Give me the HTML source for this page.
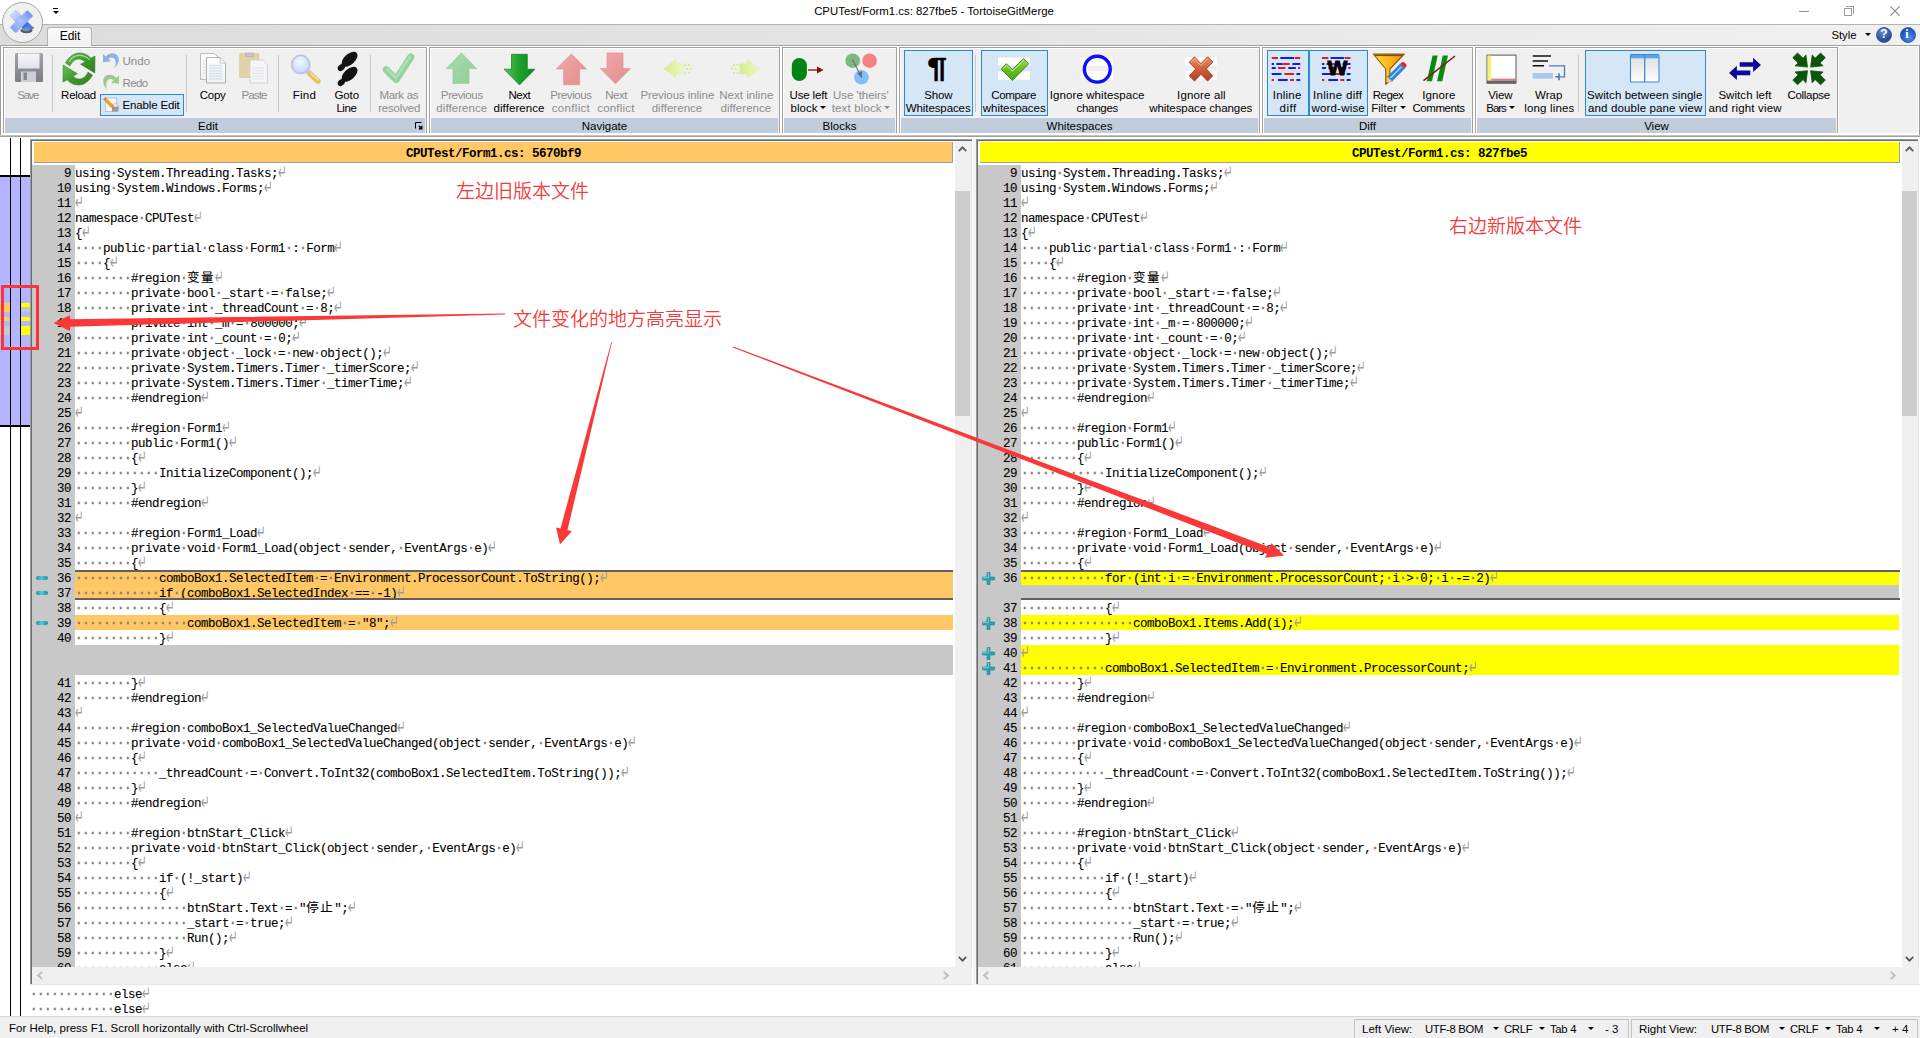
<!DOCTYPE html>
<html lang="zh"><head><meta charset="utf-8"><title>CPUTest/Form1.cs: 827fbe5 - TortoiseGitMerge</title>
<style>
*{box-sizing:border-box}
html,body{margin:0;padding:0;overflow:hidden}
body{width:1920px;height:1038px;position:relative;overflow:hidden;background:#fff;font-family:"Liberation Sans","Noto Sans CJK SC",sans-serif;font-size:11.5px;color:#000}
.a{position:absolute}
.t{position:absolute;white-space:pre;line-height:13px;text-align:center;transform:translateX(-50%)}
.dis{color:#8c8c8c}
.grp{position:absolute;top:47px;height:86px;border:1px solid #a0a0a0;border-bottom:none;background:#f0f0f0;box-shadow:0 0 0 1px #fff,inset 1px 1px 0 #fff}
.grp .lab{position:absolute;left:1px;right:1px;bottom:0;height:15px;background:#c1cddc;text-align:center;line-height:16px;font-size:11.5px}
.sep{position:absolute;top:55px;height:57px;width:1px;background:#c6c6c6}
.hl{position:absolute;background:#d5e6f7;border:1px solid #2b8ad6}
.code{position:absolute;font-family:"Liberation Mono","Noto Sans CJK SC",monospace;font-size:12.5px;letter-spacing:-0.5px;line-height:15px;white-space:pre;color:#000;height:15px}
.ln{position:absolute;font-family:"Liberation Mono",monospace;font-size:12.5px;letter-spacing:-0.5px;line-height:15px;white-space:pre;text-align:right;width:40px;height:15px}
.code,.ln{padding-top:2px;-webkit-text-stroke:0.1px #000}
.w{color:#808080;-webkit-text-stroke:0.5px #808080}
.ret{display:inline-block;width:7px;line-height:0;font-family:"DejaVu Sans",sans-serif;font-size:15px;letter-spacing:0;color:#9c9c9c;-webkit-text-stroke:0;transform:translate(0,0.5px) scale(.68,1.32);transform-origin:0 50%}
.cj{letter-spacing:1.5px;font-weight:400}
.row{position:absolute;height:15px}
</style></head><body>

<!-- title bar -->
<div class="a" style="left:0;top:0;width:1920px;height:24px;background:#fff"></div>
<div class="a" style="left:0;top:24px;width:1920px;height:1px;background:#b4b4b4"></div>
<div class="a" style="left:0;top:25px;width:1920px;height:20px;background:linear-gradient(90deg,#dcdcdc,#e4e4e4 50%,#f0f0f0 95%)"></div>
<div class="t" style="left:934px;top:5px;font-size:11.4px">CPUTest/Form1.cs: 827fbe5 - TortoiseGitMerge</div>
<!-- app button -->
<div class="a" style="left:2px;top:2px;width:41px;height:41px;border-radius:50%;border:1px solid #a4a4a4;background:#f0f0f0"></div>
<svg class="a" style="left:6px;top:6px" width="34" height="34" viewBox="6 6 34 34">
<defs>
<linearGradient id="lgA" x1="0" y1="0" x2="1" y2="0"><stop offset="0" stop-color="#d4dfff"/><stop offset=".4" stop-color="#9fb6fa"/><stop offset=".6" stop-color="#3c68ec"/><stop offset="1" stop-color="#4f7cf4"/></linearGradient>
<linearGradient id="lgB" x1="0" y1="0" x2="1" y2="0"><stop offset="0" stop-color="#6088f4"/><stop offset=".5" stop-color="#b4c8fd"/><stop offset="1" stop-color="#7498f7"/></linearGradient>
</defs>
<rect x="9.300" y="17.500" width="24.500" height="8.200" rx="1.200" transform="rotate(45 21.550 21.600)" fill="url(#lgA)" stroke="#8fa8f0" stroke-width=".5"/>
<rect x="9.300" y="17.500" width="24.500" height="8.200" rx="1.200" transform="rotate(135 21.550 21.600)" fill="url(#lgB)" stroke="#8fa8f0" stroke-width=".5" opacity=".9"/>
<ellipse cx="26.500" cy="30.500" rx="6" ry="2.800" fill="#4a5870"/>
<ellipse cx="26.300" cy="29.300" rx="4" ry="2" fill="#6f92c4"/>
<circle cx="32.500" cy="28" r="1.300" fill="#6a7a98"/>
</svg>
<!-- quick access dropdown -->
<div class="a" style="left:53px;top:8px;width:5px;height:1px;background:#000"></div>
<div class="a" style="left:52.500px;top:11px;width:0;height:0;border-left:3px solid transparent;border-right:3px solid transparent;border-top:3.500px solid #000"></div>
<!-- window controls -->
<div class="a" style="left:1799px;top:11px;width:10px;height:1px;background:#8e8e8e"></div>
<div class="a" style="left:1844px;top:8px;width:8px;height:8px;border:1px solid #9a9a9a"></div>
<div class="a" style="left:1846px;top:6px;width:8px;height:8px;border-top:1px solid #9a9a9a;border-right:1px solid #9a9a9a"></div>
<svg class="a" style="left:1890px;top:6px" width="10" height="10"><path d="M0.3 0.3L9.7 9.7M9.7 0.3L0.3 9.7" stroke="#8a8a8a" stroke-width="1.1" fill="none"/></svg>
<!-- Edit tab -->
<div class="a" style="left:47px;top:27px;width:45px;height:19px;border:1px solid #b4b4b4;border-bottom:none;border-radius:3px 3px 0 0;background:linear-gradient(#fafafa,#f0f0f0)"></div>
<div class="t" style="left:70px;top:30px;font-size:12px">Edit</div>
<!-- style / help -->
<div class="t" style="left:1844px;top:29px;font-size:11.3px">Style</div>
<div class="a" style="left:1864.5px;top:33px;width:0;height:0;border-left:3px solid transparent;border-right:3px solid transparent;border-top:3px solid #000"></div>
<div class="a" style="left:1876px;top:27px;width:16px;height:16px;border-radius:50%;background:radial-gradient(circle at 40% 25%,#6c8fd0,#274f9c 65%);border:1px solid #3a5a98"></div>
<div class="t" style="left:1884px;top:28px;font-size:12px;font-weight:bold;color:#fff">?</div>
<div class="a" style="left:1899.5px;top:27px;width:16px;height:16px;border-radius:50%;background:radial-gradient(circle at 60% 70%,#4a90e8,#1f55c8 65%);border:1px solid #3a5aa8"></div>
<div class="t" style="left:1907px;top:28px;font-size:12px;font-weight:bold;color:#fff;font-family:'Liberation Serif',serif">i</div>

<!-- ribbon panel -->
<div class="a" style="left:0;top:45px;width:1920px;height:92px;background:#f0f0f0;border-left:1px solid #9c9c9c;border-right:1px solid #9c9c9c;box-shadow:inset 1px 0 0 #fff,inset -1px 0 0 #fff"></div>
<div class="a" style="left:0;top:45px;width:1920px;height:1px;background:#a2a2a2"></div>
<div class="a" style="left:1px;top:46px;width:1918px;height:1px;background:#fff"></div>
<div class="a" style="left:48px;top:45px;width:43px;height:1px;background:#f3f3f3"></div>
<div class="a" style="left:1px;top:133px;width:1918px;height:2px;background:#fff"></div>
<div class="a" style="left:0;top:135px;width:1920px;height:1px;background:#c4c4c4"></div>
<div class="a" style="left:0;top:136px;width:1920px;height:1px;background:#a0a0a0"></div>
<div class="a" style="left:0;top:137px;width:1920px;height:1px;background:#fff"></div>
<!-- groups -->
<div class="grp" style="left:3px;width:424px"><div class="lab" style="padding-right:14px">Edit</div>
<svg class="a" style="right:3px;bottom:3px" width="8" height="8"><path d="M0.500 6.500V0.500H6.500" stroke="#000" fill="none"/><path d="M3.500 4L4.500 3.500L5.500 4.500L7.500 3.500V7.500H3.500L4.500 5.500Z" fill="#000"/></svg></div>
<div class="grp" style="left:429px;width:351px"><div class="lab">Navigate</div></div>
<div class="grp" style="left:782px;width:115px"><div class="lab">Blocks</div></div>
<div class="grp" style="left:899px;width:361px"><div class="lab">Whitespaces</div></div>
<div class="grp" style="left:1262px;width:211px"><div class="lab">Diff</div></div>
<div class="grp" style="left:1475px;width:363px"><div class="lab">View</div></div>
<div class="sep" style="left:52px"></div>
<div class="sep" style="left:186px"></div>
<div class="sep" style="left:278px"></div>
<div class="sep" style="left:370px"></div>
<div class="sep" style="left:975px"></div>
<div class="sep" style="left:1578px"></div>
<!-- highlighted (checked) buttons -->
<div class="hl" style="left:100px;top:94px;width:84px;height:22px"></div>
<div class="hl" style="left:904px;top:50px;width:69px;height:66px"></div>
<div class="hl" style="left:981px;top:50px;width:67px;height:66px"></div>
<div class="hl" style="left:1267px;top:50px;width:42px;height:66px"></div>
<div class="hl" style="left:1309px;top:50px;width:59px;height:66px"></div>
<div class="hl" style="left:1585px;top:50px;width:121px;height:66px"></div>

<!-- labels -->
<div class="a dis" style="left:17.3px;top:89px;white-space:pre;line-height:13px;letter-spacing:-1.41px">Save</div>
<div class="a" style="left:61.1px;top:89px;white-space:pre;line-height:13px;letter-spacing:-0.27px">Reload</div>
<div class="a dis" style="left:122.5px;top:55px;white-space:pre;line-height:13px;letter-spacing:0.07px">Undo</div>
<div class="a dis" style="left:122.5px;top:77px;white-space:pre;line-height:13px;letter-spacing:-0.60px">Redo</div>
<div class="a" style="left:122.5px;top:99px;white-space:pre;line-height:13px;letter-spacing:-0.15px">Enable Edit</div>
<div class="a" style="left:199.8px;top:89px;white-space:pre;line-height:13px;letter-spacing:-0.29px">Copy</div>
<div class="a dis" style="left:241.5px;top:89px;white-space:pre;line-height:13px;letter-spacing:-0.86px">Paste</div>
<div class="a" style="left:292.7px;top:89px;white-space:pre;line-height:13px;letter-spacing:0.24px">Find</div>
<div class="a" style="left:334.5px;top:89px;white-space:pre;line-height:13px;letter-spacing:-0.11px">Goto</div>
<div class="a" style="left:336.4px;top:102px;white-space:pre;line-height:13px;letter-spacing:-0.45px">Line</div>
<div class="a dis" style="left:379.4px;top:89px;white-space:pre;line-height:13px;letter-spacing:-0.30px">Mark as</div>
<div class="a dis" style="left:378.2px;top:102px;white-space:pre;line-height:13px;letter-spacing:-0.18px">resolved</div>
<div class="a dis" style="left:440.8px;top:89px;white-space:pre;line-height:13px;letter-spacing:-0.34px">Previous</div>
<div class="a dis" style="left:436.3px;top:102px;white-space:pre;line-height:13px;letter-spacing:0.07px">difference</div>
<div class="a" style="left:508.4px;top:89px;white-space:pre;line-height:13px;letter-spacing:-0.42px">Next</div>
<div class="a" style="left:493.5px;top:102px;white-space:pre;line-height:13px;letter-spacing:0.08px">difference</div>
<div class="a dis" style="left:550.2px;top:89px;white-space:pre;line-height:13px;letter-spacing:-0.42px">Previous</div>
<div class="a dis" style="left:551.8px;top:102px;white-space:pre;line-height:13px;letter-spacing:0.31px">conflict</div>
<div class="a dis" style="left:605.2px;top:89px;white-space:pre;line-height:13px;letter-spacing:-0.45px">Next</div>
<div class="a dis" style="left:597.2px;top:102px;white-space:pre;line-height:13px;letter-spacing:0.20px">conflict</div>
<div class="a dis" style="left:640.4px;top:89px;white-space:pre;line-height:13px;letter-spacing:-0.06px">Previous inline</div>
<div class="a dis" style="left:651.7px;top:102px;white-space:pre;line-height:13px;letter-spacing:0.03px">difference</div>
<div class="a dis" style="left:719.2px;top:89px;white-space:pre;line-height:13px;letter-spacing:0.04px">Next inline</div>
<div class="a dis" style="left:720.6px;top:102px;white-space:pre;line-height:13px;letter-spacing:0.03px">difference</div>
<div class="a" style="left:789.5px;top:89px;white-space:pre;line-height:13px;letter-spacing:-0.14px">Use left</div>
<div class="a" style="left:790.6px;top:102px;white-space:pre;line-height:13px;letter-spacing:0.04px">block</div>
<div class="a dis" style="left:833.1px;top:89px;white-space:pre;line-height:13px;letter-spacing:-0.05px">Use 'theirs'</div>
<div class="a dis" style="left:831.7px;top:102px;white-space:pre;line-height:13px;letter-spacing:0.15px">text block</div>
<div class="a" style="left:924.3px;top:89px;white-space:pre;line-height:13px;letter-spacing:-0.16px">Show</div>
<div class="a" style="left:905.8px;top:102px;white-space:pre;line-height:13px;letter-spacing:-0.10px">Whitespaces</div>
<div class="a" style="left:991.2px;top:89px;white-space:pre;line-height:13px;letter-spacing:-0.34px">Compare</div>
<div class="a" style="left:982.8px;top:102px;white-space:pre;line-height:13px;letter-spacing:-0.04px">whitespaces</div>
<div class="a" style="left:1049.8px;top:89px;white-space:pre;line-height:13px;letter-spacing:0.08px">Ignore whitespace</div>
<div class="a" style="left:1076.5px;top:102px;white-space:pre;line-height:13px;letter-spacing:-0.28px">changes</div>
<div class="a" style="left:1177.1px;top:89px;white-space:pre;line-height:13px;letter-spacing:0.14px">Ignore all</div>
<div class="a" style="left:1149.2px;top:102px;white-space:pre;line-height:13px;letter-spacing:-0.07px">whitespace changes</div>
<div class="a" style="left:1272.8px;top:89px;white-space:pre;line-height:13px;letter-spacing:0.20px">Inline</div>
<div class="a" style="left:1279.6px;top:102px;white-space:pre;line-height:13px;letter-spacing:0.49px">diff</div>
<div class="a" style="left:1313.0px;top:89px;white-space:pre;line-height:13px;letter-spacing:0.32px">Inline diff</div>
<div class="a" style="left:1311.4px;top:102px;white-space:pre;line-height:13px;letter-spacing:0.20px">word-wise</div>
<div class="a" style="left:1372.8px;top:89px;white-space:pre;line-height:13px;letter-spacing:-0.56px">Regex</div>
<div class="a" style="left:1371.2px;top:102px;white-space:pre;line-height:13px;letter-spacing:0.05px">Filter</div>
<div class="a" style="left:1422.2px;top:89px;white-space:pre;line-height:13px;letter-spacing:0.12px">Ignore</div>
<div class="a" style="left:1412.4px;top:102px;white-space:pre;line-height:13px;letter-spacing:-0.42px">Comments</div>
<div class="a" style="left:1488.2px;top:89px;white-space:pre;line-height:13px;letter-spacing:-0.11px">View</div>
<div class="a" style="left:1486.3px;top:102px;white-space:pre;line-height:13px;letter-spacing:-1.05px">Bars</div>
<div class="a" style="left:1535.0px;top:89px;white-space:pre;line-height:13px;letter-spacing:0.04px">Wrap</div>
<div class="a" style="left:1524.2px;top:102px;white-space:pre;line-height:13px;letter-spacing:0.17px">long lines</div>
<div class="a" style="left:1587.0px;top:89px;white-space:pre;line-height:13px;letter-spacing:0.08px">Switch between single</div>
<div class="a" style="left:1588.0px;top:102px;white-space:pre;line-height:13px;letter-spacing:0.13px">and double pane view</div>
<div class="a" style="left:1718.4px;top:89px;white-space:pre;line-height:13px;letter-spacing:0.06px">Switch left</div>
<div class="a" style="left:1708.4px;top:102px;white-space:pre;line-height:13px;letter-spacing:0.17px">and right view</div>
<div class="a" style="left:1787.4px;top:89px;white-space:pre;line-height:13px;letter-spacing:-0.28px">Collapse</div>
<div class="a" style="left:820.1px;top:105.8px;width:0;height:0;border-left:3px solid transparent;border-right:3px solid transparent;border-top:3px solid #000"></div>
<div class="a" style="left:883.9px;top:105.8px;width:0;height:0;border-left:3px solid transparent;border-right:3px solid transparent;border-top:3px solid #8c8c8c"></div>
<div class="a" style="left:1399.7px;top:105.8px;width:0;height:0;border-left:3px solid transparent;border-right:3px solid transparent;border-top:3px solid #000"></div>
<div class="a" style="left:1508.7px;top:105.8px;width:0;height:0;border-left:3px solid transparent;border-right:3px solid transparent;border-top:3px solid #000"></div>
<!-- ribbon icons -->
<svg class="a" style="left:0;top:46px" width="1920" height="90" viewBox="0 46 1920 90">
<defs>
<linearGradient id="gSave" x1="0" y1="0" x2="0" y2="1"><stop offset="0" stop-color="#a2a2a8"/><stop offset="1" stop-color="#7d7d85"/></linearGradient>
<linearGradient id="gLbl" x1="0" y1="0" x2="0" y2="1"><stop offset="0" stop-color="#f6f7f9"/><stop offset="1" stop-color="#dfe3ea"/></linearGradient>
<linearGradient id="gGreen" x1="0" y1="0" x2="1" y2="1"><stop offset="0" stop-color="#6dc25a"/><stop offset=".5" stop-color="#3f9a2c"/><stop offset="1" stop-color="#2c7f1d"/></linearGradient>
<linearGradient id="gDn" x1="0" y1="0" x2="1" y2="0"><stop offset="0" stop-color="#52c852"/><stop offset=".5" stop-color="#1fa02a"/><stop offset="1" stop-color="#0c8a1c"/></linearGradient>
<linearGradient id="gUpL" x1="0" y1="0" x2="1" y2="1"><stop offset="0" stop-color="#a9dcae"/><stop offset="1" stop-color="#8fcd98"/></linearGradient>
<linearGradient id="gRedL" x1="0" y1="0" x2="1" y2="1"><stop offset="0" stop-color="#f0a8a8"/><stop offset="1" stop-color="#e38e8e"/></linearGradient>
<linearGradient id="gPage" x1="0" y1="0" x2="0" y2="1"><stop offset="0" stop-color="#ffffff"/><stop offset="1" stop-color="#eef0f2"/></linearGradient>
<radialGradient id="gLens" cx=".45" cy=".35" r=".7"><stop offset="0" stop-color="#f4faff"/><stop offset=".6" stop-color="#cfe5fb"/><stop offset="1" stop-color="#b9d6f5"/></radialGradient>
<linearGradient id="gFun" x1="0" y1="0" x2="1" y2="0"><stop offset="0" stop-color="#ffe030"/><stop offset=".5" stop-color="#ffb820"/><stop offset="1" stop-color="#f08a10"/></linearGradient>
<linearGradient id="gPane" x1="0" y1="0" x2="0" y2="1"><stop offset="0" stop-color="#dcdcdc"/><stop offset="1" stop-color="#ffffff"/></linearGradient>
<linearGradient id="gChk" x1="0" y1="0" x2="0" y2="1"><stop offset="0" stop-color="#9cdc50"/><stop offset=".55" stop-color="#62bc18"/><stop offset="1" stop-color="#4aa810"/></linearGradient>
<linearGradient id="gX" x1="0" y1="0" x2="0" y2="1"><stop offset="0" stop-color="#e8764a"/><stop offset="1" stop-color="#b23a1c"/></linearGradient>
<linearGradient id="gInl" x1="0" y1="0" x2="1" y2="0"><stop offset="0" stop-color="#d4ec8a"/><stop offset="1" stop-color="#eef7c8"/></linearGradient>
<linearGradient id="gX2" gradientUnits="userSpaceOnUse" x1="0" y1="57" x2="0" y2="81"><stop offset="0" stop-color="#ec9460"/><stop offset=".5" stop-color="#d0603c"/><stop offset="1" stop-color="#b43c24"/></linearGradient>
</defs>
<!-- Save -->
<rect x="15" y="53" width="28" height="29" rx="1.5" fill="url(#gSave)"/>
<rect x="18" y="53.5" width="21.5" height="15" fill="url(#gLbl)"/>
<rect x="21" y="71.5" width="15" height="10.5" fill="#cfcfd3"/>
<rect x="23.5" y="72.5" width="3.5" height="7.5" fill="#84848c"/>
<!-- Reload -->
<g fill="url(#gGreen)" stroke="#2f7f1f" stroke-width=".6">
<path d="M65.5 63 C69 56 75 52.8 80 53 C85 53.2 88.5 55.5 90.8 58.2 L95 56 L94.8 73 L80.6 64.2 L85 62 C83 59.8 81 59 79 59 C75 59 72 61.5 70 65.8 Z"/>
<path d="M92.5 75 C89 82 83 85.200 78 85 C73 84.800 69.500 82.500 67.200 79.800 L63 82 L63.200 65 L77.400 73.800 L73 76 C75 78.200 77 79 79 79 C83 79 86 76.500 88 72.200 Z"/>
</g>
<path d="M69 61.500 C72 57 76 55.200 80 55.300 C84 55.400 87 57 89.500 59.800" stroke="#b9e8a8" stroke-width="1.200" fill="none" opacity=".8"/>
<!-- Undo -->
<path d="M103 54 L103 62.300 L110.800 61.300 L108.300 58.800 C110 57.300 112.500 57 114 58.300 C116.200 60.300 116 64 114.800 67.800 C118.500 64 120 59.500 117.800 56 C115.300 52.300 109.500 52.300 105.800 56.500 Z" fill="#8fb0e8"/>
<!-- Redo -->
<path d="M119 75.500 L119 83.800 L111.200 82.800 L113.700 80.300 C112 78.800 109.500 78.500 108 79.800 C105.800 81.800 106 85.500 107.200 89.500 C103.500 85.500 102 81 104.200 77.500 C106.700 73.800 112.500 73.800 116.200 78 Z" fill="#9dca8e"/>
<!-- Enable edit icon -->
<rect x="105.500" y="98" width="11" height="13.500" fill="#f4f4f4" stroke="#b8b8b8" stroke-width=".8"/>
<path d="M112 105.500 h6.500 v6 h-6.500 z" fill="#9a9a9a"/><ellipse cx="115.200" cy="105.300" rx="3.300" ry="1.800" fill="#e6e6e6" stroke="#a8a8a8" stroke-width=".5"/>
<path d="M103.500 99.300 L105.300 97.500 L113 105.200 L113.500 107.800 L111 107.200 Z" fill="#f2a31e" stroke="#b87410" stroke-width=".5"/>
<path d="M103.500 99.300 L105.300 97.500 L106.300 98.500 L104.500 100.300 Z" fill="#e0705a"/>
<!-- Copy -->
<path d="M200.500 53.500 h14 l4 4 v22 h-18 z" fill="url(#gPage)" stroke="#b4b4b4" stroke-width=".9"/>
<path d="M203 61h4M203 64h4M203 67h4M203 70h4M203 73h4" stroke="#d3deeb" stroke-width="1"/>
<path d="M206.500 57.500 h13.500 l5.500 5.500 v20 h-19 z" fill="url(#gPage)" stroke="#a8a8a8" stroke-width=".9"/>
<path d="M220 57.500 v5.500 h5.500" fill="#f0f0f0" stroke="#b8b8b8" stroke-width=".7"/>
<path d="M209 65.500h13M209 68.200h13M209 70.800h13M209 73.500h13M209 76.200h13M209 78.800h13" stroke="#cfdbe9" stroke-width="1.200"/>
<!-- Paste -->
<rect x="239.600" y="53.500" width="19.300" height="24" rx="1.500" fill="#e3d2a8" stroke="#d3c090" stroke-width=".6"/>
<rect x="245.400" y="53" width="8.200" height="3.800" fill="#c4c4c4" stroke="#a6a6a6" stroke-width=".5"/>
<path d="M250 60 h12.500 l5 5 v18 h-17.500 z" fill="#f5f5f5" stroke="#cfcfcf" stroke-width=".9"/>
<path d="M252.500 68h11.500M252.500 70.700h11.500M252.500 73.400h11.500M252.500 76.100h11.500M252.500 78.800h11.500" stroke="#dfe5ec" stroke-width="1.100"/>
<!-- Find -->
<path d="M308 72 L318 81.300" stroke="#c9c4dc" stroke-width="5.600" stroke-linecap="round"/>
<path d="M310.300 74.200 L317.800 81.200" stroke="#f1c232" stroke-width="4.200" stroke-linecap="round"/>
<path d="M310.800 73.200 L318.300 80.200" stroke="#fbe79a" stroke-width="1.200" stroke-linecap="round"/>
<circle cx="300.700" cy="64.400" r="9" fill="url(#gLens)" stroke="#c4bfe0" stroke-width="1.800"/>
<!-- Goto line (footprints) -->
<g fill="#141414">
<ellipse cx="349.600" cy="59.300" rx="9.600" ry="5.300" transform="rotate(-42 349.600 59.300)"/>
<ellipse cx="341.300" cy="67.600" rx="4" ry="3" transform="rotate(-42 341.300 67.600)"/>
<ellipse cx="349.600" cy="74.300" rx="9.600" ry="5.300" transform="rotate(-42 349.600 74.300)"/>
<ellipse cx="341.300" cy="82.600" rx="4" ry="3" transform="rotate(-42 341.300 82.600)"/>
</g>
<!-- Mark as resolved -->
<path d="M386.300 69.800 L396.200 79.500 L410.800 57" stroke="#93d39b" stroke-width="7" stroke-linecap="round" stroke-linejoin="round" fill="none"/>
<path d="M387 69.300 L396 78 L410 57" stroke="#b4e3b8" stroke-width="2.500" stroke-linecap="round" stroke-linejoin="round" fill="none" opacity=".8"/>
<!-- Prev diff -->
<path d="M461.400 52.800 L476.500 68.600 L469 68.600 L469 83.500 L453 83.500 L453 68.600 L446.200 68.600 Z" fill="url(#gUpL)" stroke="#8ccb95" stroke-width=".6"/>
<!-- Next diff -->
<path d="M511.500 54.300 L527.300 54.300 L527.300 69.200 L535 69.200 L519.500 84.900 L504 69.200 L511.500 69.200 Z" fill="url(#gDn)" stroke="#0f7f1a" stroke-width=".7"/>
<!-- Prev conflict -->
<path d="M571.400 54 L586.500 69 L579.600 69 L579.600 84.700 L563.600 84.700 L563.600 69 L556.200 69 Z" fill="url(#gRedL)" stroke="#dc8c8c" stroke-width=".6"/>
<!-- Next conflict -->
<path d="M607 53 L623 53 L623 68.600 L630.600 68.600 L615.500 83.700 L600.300 68.600 L607 68.600 Z" fill="url(#gRedL)" stroke="#dc8c8c" stroke-width=".6"/>
<!-- Prev inline -->
<path d="M663.800 68.800 L675.800 59.300 L675.800 63.800 L683.500 63.800 L683.500 74 L675.800 74 L675.800 78.200 Z" fill="url(#gInl)" stroke="#dcecb0" stroke-width=".6"/>
<g fill="#d8ec98"><rect x="684.500" y="64" width="2" height="2"/><rect x="688" y="64" width="2" height="2"/><rect x="686.200" y="68" width="2" height="2"/><rect x="690" y="68" width="2" height="2"/><rect x="684.500" y="72" width="2" height="2"/><rect x="688" y="72" width="2" height="2"/></g>
<!-- Next inline -->
<path d="M759.500 68.800 L747.500 59.300 L747.500 63.800 L739.800 63.800 L739.800 74 L747.500 74 L747.500 78.200 Z" fill="url(#gInl)" stroke="#dcecb0" stroke-width=".6"/>
<g fill="#d8ec98"><rect x="736.500" y="64" width="2" height="2"/><rect x="733" y="64" width="2" height="2"/><rect x="734.800" y="68" width="2" height="2"/><rect x="731" y="68" width="2" height="2"/><rect x="736.500" y="72" width="2" height="2"/><rect x="733" y="72" width="2" height="2"/></g>
<!-- Use left block -->
<rect x="791.800" y="58.100" width="15.100" height="22.900" rx="7.500" fill="#008513"/>
<path d="M808 70 H818" stroke="#7a1414" stroke-width="1.300"/><path d="M817 66.600 L823.500 70 L817 73.600 Z" fill="#7a1414"/>
<!-- Use theirs -->
<circle cx="852.700" cy="60.700" r="7.300" fill="#7cb981"/><circle cx="869.600" cy="60.700" r="7.300" fill="#f58282"/><circle cx="861.400" cy="77.300" r="7.300" fill="#7fc0f9"/>
<path d="M852.500 59.500 L860.300 75" stroke="#6e6e6e" stroke-width="1.100"/><path d="M857.300 73.300 L861.800 78.300 L862.300 71 Z" fill="#6e6e6e"/>
<!-- Compare check -->
<rect x="998" y="57.500" width="32" height="8" fill="#fff"/><rect x="998" y="71.300" width="32" height="8.400" fill="#fff"/>
<path d="M1001.400 69.200 L1006.200 63.700 L1012.400 69.500 L1023.700 58.600 L1028.800 63.700 L1012.400 80.500 Z" fill="url(#gChk)" stroke="#3c7d12" stroke-width=".9" stroke-linejoin="round"/>
<path d="M1003 69 L1006.300 65.300 L1012.400 71 L1023.700 60.200" stroke="#c4ee98" stroke-width="1.100" fill="none" opacity=".8"/>
<!-- Ignore ws: O -->
<rect x="1081.300" y="57.500" width="31.700" height="8" fill="#fff"/><rect x="1081.300" y="71.300" width="31.700" height="8.400" fill="#fff"/>
<circle cx="1097.300" cy="69.200" r="12.950" fill="none" stroke="#0f0ffa" stroke-width="3.400"/>
<!-- Ignore all: X -->
<rect x="1185" y="57.500" width="31.800" height="8" fill="#fff"/><rect x="1185" y="71.300" width="31.800" height="8.400" fill="#fff"/>
<path d="M1194.500 56.800 L1200.900 63.700 L1207.600 56.800 L1212.800 62 L1206.300 68.900 L1212.800 75.800 L1207.600 81.100 L1200.900 74.200 L1194.500 81.100 L1189.200 75.800 L1195.800 68.900 L1189.200 62.400 Z" fill="url(#gX2)" stroke="#a4381c" stroke-width=".9" stroke-linejoin="round"/>
<path d="M1191 62.300 L1194.600 58.600 L1200.900 65.400 L1207.500 58.600" stroke="#f2b088" stroke-width="1.100" fill="none" opacity=".7"/>
<!-- Inline diff -->
<g id="idf">
<path d="M1271.700 58h6.300M1294.700 58h5.500M1282.300 64h7.500M1278 68h7.500M1298 68h2.200M1284.300 74h9.800M1271.700 80h2.300M1290 80h4" stroke="#f01818" stroke-width="2.100"/>
<path d="M1280.300 58h13.700M1271.700 64h2.300M1276.300 64h6M1292.400 64h7.800M1271.700 68h4M1288.300 68h7.500M1271.700 74h9.800M1296.400 74h3.800M1278 80h9.700M1296.400 80h3.800" stroke="#1818f0" stroke-width="2.100"/>
</g>
<use href="#idf" x="50.300"/>
<text x="1337.500" y="75.300" text-anchor="middle" font-family="'Liberation Sans',sans-serif" font-weight="bold" font-size="25" fill="#000" stroke="#000" stroke-width=".9">w</text>
<!-- Regex filter -->
<path d="M1373.300 54 L1404.300 54 L1390 69 L1390 80.500 L1385.700 84.500 L1385.700 69 Z" fill="url(#gFun)" stroke="#8a5a08" stroke-width="1.100" stroke-linejoin="round"/>
<path d="M1375 55.300 H1402.500" stroke="#7a4e06" stroke-width="1.600"/>
<path d="M1400.300 63.800 L1404.800 68.300 L1392 81.300 L1387.500 76.800 Z" fill="#2f86e0" stroke="#2468b8" stroke-width=".5"/>
<path d="M1400.300 63.800 L1402 62.200 C1403.600 60.800 1407.600 64.600 1406.300 66.500 L1404.800 68.300 Z" fill="#e22828"/>
<path d="M1387.500 76.800 L1392 81.300 L1386 83.300 Z" fill="#ecd090" stroke="#b08a40" stroke-width=".4"/>
<path d="M1386 83.300 l1.400 -.5 l-.9 -.9z" fill="#333"/>
<path d="M1401.500 66.800 L1390.500 78" stroke="#9fd0f8" stroke-width="1.500"/>
<!-- Ignore comments -->
<path d="M1432.500 55.500 L1437.700 55.500 L1432 81.200 L1426.800 81.200 Z" fill="#0a8a10"/>
<path d="M1442.800 55.500 L1448 55.500 L1442.300 81.200 L1437.100 81.200 Z" fill="#0a8a10"/>
<path d="M1455 56 L1423.500 80.700" stroke="#7a1a1a" stroke-width="1.500"/>
<!-- View bars -->
<rect x="1487" y="55.100" width="29" height="28" fill="#fff" stroke="#555" stroke-width="1"/>
<rect x="1487.500" y="55.600" width="3.800" height="25" fill="#f4f07c"/>
<rect x="1491.300" y="78.600" width="24.200" height="2" fill="#e27878"/>
<rect x="1487" y="80.600" width="29" height="3" fill="#666"/>
<!-- Wrap long lines -->
<path d="M1532.700 56h18.300M1532.700 61h15.300M1532.700 65.800h11.300" stroke="#111" stroke-width="1.400"/>
<path d="M1549 65.800 H1564.500 V76.800 H1557" stroke="#4a78c8" stroke-width="1.300" fill="none"/>
<path d="M1559 73.300 V80.300 M1555.300 76.800 h4" stroke="#4a78c8" stroke-width="1.600"/>
<rect x="1532.700" y="73" width="20.300" height="5.700" fill="#a9c6f0"/>
<!-- Switch single/double pane -->
<rect x="1630.500" y="54.500" width="28.500" height="27.500" rx="1" fill="url(#gPane)" stroke="#3a8ad8" stroke-width="1.100"/>
<rect x="1631" y="55" width="27.500" height="3.300" fill="#5aa5e8"/>
<path d="M1644.700 54.500 V82" stroke="#3a8ad8" stroke-width="1.300"/>
<!-- Switch left right -->
<path d="M1739.700 62.250 H1753.100 V57.700 L1761 64.900 L1753.100 72 V66.750 H1739.700 Z" fill="#0a0a98"/>
<path d="M1750.300 70.500 H1736.900 V65.800 L1729 73 L1736.900 79.900 V75.200 H1750.300 Z" fill="#0a0a98"/>
<!-- Collapse -->
<g fill="#0b550b" stroke="#0b550b" stroke-width=".8" stroke-linejoin="round">
<path d="M1797.5 53 L1803.1 58.3 L1805.9 54.9 L1807.5 67.1 L1795 65.8 L1798.1 63 L1792.800 57.7 Z"/>
<path d="M1797.5 53 L1803.1 58.3 L1805.9 54.9 L1807.5 67.1 L1795 65.8 L1798.1 63 L1792.800 57.7 Z" transform="translate(3618.12 0) scale(-1 1)"/>
<path d="M1797.5 53 L1803.1 58.3 L1805.9 54.9 L1807.5 67.1 L1795 65.8 L1798.1 63 L1792.800 57.7 Z" transform="translate(0 137.80) scale(1 -1)"/>
<path d="M1797.5 53 L1803.1 58.3 L1805.9 54.9 L1807.5 67.1 L1795 65.8 L1798.1 63 L1792.800 57.7 Z" transform="translate(3618.12 137.80) scale(-1 -1)"/>
</g>
</svg>
<!-- pilcrow -->
<div class="a" style="left:917px;top:50px;width:40px;text-align:center;font:bold 30px/36px 'Liberation Sans',sans-serif;-webkit-text-stroke:.5px #000;transform:scale(1.18,.9);transform-origin:50% 40%">¶</div>

<!-- locator bar -->
<div class="a" style="left:0;top:177px;width:30px;height:248px;background:#b4b4ff"></div>
<div class="a" style="left:0;top:303px;width:10px;height:9px;background:#ffc864"></div>
<div class="a" style="left:0;top:317px;width:10px;height:4px;background:#ffc864"></div>
<div class="a" style="left:0;top:326px;width:10px;height:9px;background:#c8c8c8"></div>
<div class="a" style="left:21px;top:303px;width:9px;height:4px;background:#ffff00"></div>
<div class="a" style="left:21px;top:307px;width:9px;height:5px;background:#c8c8c8"></div>
<div class="a" style="left:21px;top:317px;width:9px;height:4px;background:#ffff00"></div>
<div class="a" style="left:21px;top:326px;width:9px;height:9px;background:#ffff00"></div>
<div class="a" style="left:10px;top:138px;width:1px;height:878px;background:#000"></div>
<div class="a" style="left:20px;top:138px;width:1px;height:878px;background:#000"></div>
<div class="a" style="left:0;top:175px;width:30px;height:2px;background:#000"></div>
<div class="a" style="left:0;top:425px;width:30px;height:2px;background:#000"></div>
<!-- left pane frame -->
<div class="a" style="left:30px;top:139px;width:1px;height:845px;background:#a0a0a0"></div>
<div class="a" style="left:31px;top:140px;width:1px;height:844px;background:#696969"></div>
<div class="a" style="left:30px;top:139px;width:942px;height:1px;background:#a0a0a0"></div>
<div class="a" style="left:31px;top:140px;width:941px;height:1px;background:#696969"></div>
<div class="a" style="left:34px;top:142px;width:919px;height:21px;background:#ffc864;border-right:1px solid #a0a0a0;border-bottom:1px solid #a0a0a0"></div>
<div class="a" style="left:34px;top:145.500px;width:919px;text-align:center;font:bold 12.500px 'Liberation Mono',monospace;letter-spacing:-0.500px;line-height:17px;white-space:pre">CPUTest/Form1.cs: 5670bf9</div>
<!-- left v scrollbar -->
<div class="a" style="left:955px;top:141px;width:17px;height:826px;background:#f0f0f0;border-right:1px solid #e3e3e3"></div>
<div class="a" style="left:955px;top:191px;width:15px;height:225px;background:#cdcdcd"></div>
<svg class="a" style="left:958px;top:145px" width="9" height="8"><path d="M0.8 6.2L4.5 2.300L8.200 6.200" stroke="#555" stroke-width="1.700" fill="none"/></svg>
<svg class="a" style="left:958px;top:955px" width="9" height="8"><path d="M0.8 1.8L4.5 5.700L8.200 1.800" stroke="#555" stroke-width="1.700" fill="none"/></svg>
<!-- left h scrollbar -->
<div class="a" style="left:32px;top:967px;width:940px;height:17px;background:#f0f0f0"></div>
<div class="a" style="left:30px;top:984px;width:1890px;height:1px;background:#e6e6e6"></div>
<svg class="a" style="left:36px;top:971px" width="8" height="9"><path d="M6.300 1L2 4.500L6.300 8" stroke="#bdbdbd" stroke-width="1.800" fill="none"/></svg>
<svg class="a" style="left:942px;top:971px" width="8" height="9"><path d="M1.700 1L6 4.500L1.700 8" stroke="#bdbdbd" stroke-width="1.800" fill="none"/></svg>
<!-- splitter -->
<div class="a" style="left:973px;top:139px;width:3px;height:846px;background:#f4f4f4"></div>
<!-- right pane frame -->
<div class="a" style="left:976px;top:139px;width:1px;height:845px;background:#a0a0a0"></div>
<div class="a" style="left:977px;top:140px;width:1px;height:844px;background:#696969"></div>
<div class="a" style="left:976px;top:139px;width:942px;height:1px;background:#a0a0a0"></div>
<div class="a" style="left:977px;top:140px;width:941px;height:1px;background:#696969"></div>
<div class="a" style="left:980px;top:142px;width:920px;height:21px;background:#ffff00;border-right:1px solid #a0a0a0;border-bottom:1px solid #a0a0a0"></div>
<div class="a" style="left:980px;top:145.500px;width:919px;text-align:center;font:bold 12.500px 'Liberation Mono',monospace;letter-spacing:-0.500px;line-height:17px;white-space:pre">CPUTest/Form1.cs: 827fbe5</div>
<!-- right v scrollbar -->
<div class="a" style="left:1902px;top:141px;width:17px;height:826px;background:#f0f0f0;border-right:1px solid #e3e3e3"></div>
<div class="a" style="left:1902px;top:191px;width:15px;height:225px;background:#cdcdcd"></div>
<svg class="a" style="left:1905px;top:145px" width="9" height="8"><path d="M0.8 6.2L4.5 2.300L8.200 6.200" stroke="#555" stroke-width="1.700" fill="none"/></svg>
<svg class="a" style="left:1905px;top:955px" width="9" height="8"><path d="M0.8 1.8L4.5 5.700L8.200 1.800" stroke="#555" stroke-width="1.700" fill="none"/></svg>
<!-- right h scrollbar -->
<div class="a" style="left:978px;top:967px;width:941px;height:17px;background:#f0f0f0"></div>
<svg class="a" style="left:982px;top:971px" width="8" height="9"><path d="M6.300 1L2 4.500L6.300 8" stroke="#bdbdbd" stroke-width="1.800" fill="none"/></svg>
<svg class="a" style="left:1889px;top:971px" width="8" height="9"><path d="M1.700 1L6 4.500L1.700 8" stroke="#bdbdbd" stroke-width="1.800" fill="none"/></svg>
<!-- line diff bar -->
<div class="code" style="left:30px;top:986px"><span class="w">············</span>else<span class="w ret">↵</span></div>
<div class="code" style="left:30px;top:1001px"><span class="w">············</span>else<span class="w ret">↵</span></div>
<!-- status bar -->
<div class="a" style="left:0;top:1016px;width:1920px;height:22px;background:#f0f0f0;border-top:1px solid #d7d7d7"></div>
<div class="a" style="left:9px;top:1021px;white-space:pre;line-height:14px;font-size:11.5px">For Help, press F1. Scroll horizontally with Ctrl-Scrollwheel</div>
<div class="a" style="left:1354px;top:1019px;width:275px;height:19px;border:1px solid #c4c4c4;border-bottom:none"></div>
<div class="a" style="left:1631px;top:1019px;width:287px;height:19px;border:1px solid #c4c4c4;border-bottom:none"></div>
<div class="a" style="left:1362px;top:1022px;white-space:pre;line-height:14px">Left View:</div>
<div class="a" style="left:1425px;top:1022px;white-space:pre;line-height:14px;letter-spacing:-0.3px;font-size:11.3px">UTF-8 BOM</div>
<div class="a" style="left:1504px;top:1022px;white-space:pre;line-height:14px;letter-spacing:-0.3px;font-size:11.3px">CRLF</div>
<div class="a" style="left:1550px;top:1022px;white-space:pre;line-height:14px;letter-spacing:-0.3px;font-size:11.3px">Tab 4</div>
<div class="a" style="left:1605px;top:1022px;white-space:pre;line-height:14px">- 3</div>
<div class="a" style="left:1639px;top:1022px;white-space:pre;line-height:14px">Right View:</div>
<div class="a" style="left:1711px;top:1022px;white-space:pre;line-height:14px;letter-spacing:-0.3px;font-size:11.3px">UTF-8 BOM</div>
<div class="a" style="left:1790px;top:1022px;white-space:pre;line-height:14px;letter-spacing:-0.3px;font-size:11.3px">CRLF</div>
<div class="a" style="left:1836px;top:1022px;white-space:pre;line-height:14px;letter-spacing:-0.3px;font-size:11.3px">Tab 4</div>
<div class="a" style="left:1892px;top:1022px;white-space:pre;line-height:14px">+ 4</div>
<div class="a" style="left:1493px;top:1027px;width:0;height:0;border-left:3px solid transparent;border-right:3px solid transparent;border-top:3px solid #000"></div>
<div class="a" style="left:1539px;top:1027px;width:0;height:0;border-left:3px solid transparent;border-right:3px solid transparent;border-top:3px solid #000"></div>
<div class="a" style="left:1588px;top:1027px;width:0;height:0;border-left:3px solid transparent;border-right:3px solid transparent;border-top:3px solid #000"></div>
<div class="a" style="left:1779px;top:1027px;width:0;height:0;border-left:3px solid transparent;border-right:3px solid transparent;border-top:3px solid #000"></div>
<div class="a" style="left:1825px;top:1027px;width:0;height:0;border-left:3px solid transparent;border-right:3px solid transparent;border-top:3px solid #000"></div>
<div class="a" style="left:1874px;top:1027px;width:0;height:0;border-left:3px solid transparent;border-right:3px solid transparent;border-top:3px solid #000"></div>

<!-- left pane -->
<div class="a" style="left:32px;top:165px;width:43px;height:802px;background:#c8c8c8"></div>
<div class="ln" style="left:31px;top:165px">9</div>
<div class="code" style="left:75px;top:165px">using<span class="w">·</span>System.Threading.Tasks;<span class="w ret">↵</span></div>
<div class="ln" style="left:31px;top:180px">10</div>
<div class="code" style="left:75px;top:180px">using<span class="w">·</span>System.Windows.Forms;<span class="w ret">↵</span></div>
<div class="ln" style="left:31px;top:195px">11</div>
<div class="code" style="left:75px;top:195px"><span class="w ret">↵</span></div>
<div class="ln" style="left:31px;top:210px">12</div>
<div class="code" style="left:75px;top:210px">namespace<span class="w">·</span>CPUTest<span class="w ret">↵</span></div>
<div class="ln" style="left:31px;top:225px">13</div>
<div class="code" style="left:75px;top:225px">{<span class="w ret">↵</span></div>
<div class="ln" style="left:31px;top:240px">14</div>
<div class="code" style="left:75px;top:240px"><span class="w">····</span>public<span class="w">·</span>partial<span class="w">·</span>class<span class="w">·</span>Form1<span class="w">·</span>:<span class="w">·</span>Form<span class="w ret">↵</span></div>
<div class="ln" style="left:31px;top:255px">15</div>
<div class="code" style="left:75px;top:255px"><span class="w">····</span>{<span class="w ret">↵</span></div>
<div class="ln" style="left:31px;top:270px">16</div>
<div class="code" style="left:75px;top:270px"><span class="w">········</span>#region<span class="w">·</span><span class="cj">变量</span><span class="w ret">↵</span></div>
<div class="ln" style="left:31px;top:285px">17</div>
<div class="code" style="left:75px;top:285px"><span class="w">········</span>private<span class="w">·</span>bool<span class="w">·</span>_start<span class="w">·</span>=<span class="w">·</span>false;<span class="w ret">↵</span></div>
<div class="ln" style="left:31px;top:300px">18</div>
<div class="code" style="left:75px;top:300px"><span class="w">········</span>private<span class="w">·</span>int<span class="w">·</span>_threadCount<span class="w">·</span>=<span class="w">·</span>8;<span class="w ret">↵</span></div>
<div class="ln" style="left:31px;top:315px">19</div>
<div class="code" style="left:75px;top:315px"><span class="w">········</span>private<span class="w">·</span>int<span class="w">·</span>_m<span class="w">·</span>=<span class="w">·</span>800000;<span class="w ret">↵</span></div>
<div class="ln" style="left:31px;top:330px">20</div>
<div class="code" style="left:75px;top:330px"><span class="w">········</span>private<span class="w">·</span>int<span class="w">·</span>_count<span class="w">·</span>=<span class="w">·</span>0;<span class="w ret">↵</span></div>
<div class="ln" style="left:31px;top:345px">21</div>
<div class="code" style="left:75px;top:345px"><span class="w">········</span>private<span class="w">·</span>object<span class="w">·</span>_lock<span class="w">·</span>=<span class="w">·</span>new<span class="w">·</span>object();<span class="w ret">↵</span></div>
<div class="ln" style="left:31px;top:360px">22</div>
<div class="code" style="left:75px;top:360px"><span class="w">········</span>private<span class="w">·</span>System.Timers.Timer<span class="w">·</span>_timerScore;<span class="w ret">↵</span></div>
<div class="ln" style="left:31px;top:375px">23</div>
<div class="code" style="left:75px;top:375px"><span class="w">········</span>private<span class="w">·</span>System.Timers.Timer<span class="w">·</span>_timerTime;<span class="w ret">↵</span></div>
<div class="ln" style="left:31px;top:390px">24</div>
<div class="code" style="left:75px;top:390px"><span class="w">········</span>#endregion<span class="w ret">↵</span></div>
<div class="ln" style="left:31px;top:405px">25</div>
<div class="code" style="left:75px;top:405px"><span class="w ret">↵</span></div>
<div class="ln" style="left:31px;top:420px">26</div>
<div class="code" style="left:75px;top:420px"><span class="w">········</span>#region<span class="w">·</span>Form1<span class="w ret">↵</span></div>
<div class="ln" style="left:31px;top:435px">27</div>
<div class="code" style="left:75px;top:435px"><span class="w">········</span>public<span class="w">·</span>Form1()<span class="w ret">↵</span></div>
<div class="ln" style="left:31px;top:450px">28</div>
<div class="code" style="left:75px;top:450px"><span class="w">········</span>{<span class="w ret">↵</span></div>
<div class="ln" style="left:31px;top:465px">29</div>
<div class="code" style="left:75px;top:465px"><span class="w">············</span>InitializeComponent();<span class="w ret">↵</span></div>
<div class="ln" style="left:31px;top:480px">30</div>
<div class="code" style="left:75px;top:480px"><span class="w">········</span>}<span class="w ret">↵</span></div>
<div class="ln" style="left:31px;top:495px">31</div>
<div class="code" style="left:75px;top:495px"><span class="w">········</span>#endregion<span class="w ret">↵</span></div>
<div class="ln" style="left:31px;top:510px">32</div>
<div class="code" style="left:75px;top:510px"><span class="w ret">↵</span></div>
<div class="ln" style="left:31px;top:525px">33</div>
<div class="code" style="left:75px;top:525px"><span class="w">········</span>#region<span class="w">·</span>Form1_Load<span class="w ret">↵</span></div>
<div class="ln" style="left:31px;top:540px">34</div>
<div class="code" style="left:75px;top:540px"><span class="w">········</span>private<span class="w">·</span>void<span class="w">·</span>Form1_Load(object<span class="w">·</span>sender,<span class="w">·</span>EventArgs<span class="w">·</span>e)<span class="w ret">↵</span></div>
<div class="ln" style="left:31px;top:555px">35</div>
<div class="code" style="left:75px;top:555px"><span class="w">········</span>{<span class="w ret">↵</span></div>
<div class="a" style="left:75px;top:570px;width:878px;height:15px;background:#ffc864"></div>
<div class="ln" style="left:31px;top:570px">36</div>
<div class="code" style="left:75px;top:570px"><span class="w">············</span>comboBox1.SelectedItem<span class="w">·</span>=<span class="w">·</span>Environment.ProcessorCount.ToString();<span class="w ret">↵</span></div>
<div class="a" style="left:36px;top:576px;width:12px;height:4px;border-radius:2px;background:linear-gradient(90deg,#1d8fa5,#55c6d6 45%,#1d8fa5)"></div>
<div class="a" style="left:75px;top:585px;width:878px;height:15px;background:#ffc864"></div>
<div class="ln" style="left:31px;top:585px">37</div>
<div class="code" style="left:75px;top:585px"><span class="w">············</span>if<span class="w">·</span>(comboBox1.SelectedIndex<span class="w">·</span>==<span class="w">·</span>-1)<span class="w ret">↵</span></div>
<div class="a" style="left:36px;top:591px;width:12px;height:4px;border-radius:2px;background:linear-gradient(90deg,#1d8fa5,#55c6d6 45%,#1d8fa5)"></div>
<div class="ln" style="left:31px;top:600px">38</div>
<div class="code" style="left:75px;top:600px"><span class="w">············</span>{<span class="w ret">↵</span></div>
<div class="a" style="left:75px;top:615px;width:878px;height:15px;background:#ffc864"></div>
<div class="ln" style="left:31px;top:615px">39</div>
<div class="code" style="left:75px;top:615px"><span class="w">················</span>comboBox1.SelectedItem<span class="w">·</span>=<span class="w">·</span>"8";<span class="w ret">↵</span></div>
<div class="a" style="left:36px;top:621px;width:12px;height:4px;border-radius:2px;background:linear-gradient(90deg,#1d8fa5,#55c6d6 45%,#1d8fa5)"></div>
<div class="ln" style="left:31px;top:630px">40</div>
<div class="code" style="left:75px;top:630px"><span class="w">············</span>}<span class="w ret">↵</span></div>
<div class="a" style="left:75px;top:645px;width:878px;height:15px;background:#c8c8c8"></div>
<div class="a" style="left:75px;top:660px;width:878px;height:15px;background:#c8c8c8"></div>
<div class="ln" style="left:31px;top:675px">41</div>
<div class="code" style="left:75px;top:675px"><span class="w">········</span>}<span class="w ret">↵</span></div>
<div class="ln" style="left:31px;top:690px">42</div>
<div class="code" style="left:75px;top:690px"><span class="w">········</span>#endregion<span class="w ret">↵</span></div>
<div class="ln" style="left:31px;top:705px">43</div>
<div class="code" style="left:75px;top:705px"><span class="w ret">↵</span></div>
<div class="ln" style="left:31px;top:720px">44</div>
<div class="code" style="left:75px;top:720px"><span class="w">········</span>#region<span class="w">·</span>comboBox1_SelectedValueChanged<span class="w ret">↵</span></div>
<div class="ln" style="left:31px;top:735px">45</div>
<div class="code" style="left:75px;top:735px"><span class="w">········</span>private<span class="w">·</span>void<span class="w">·</span>comboBox1_SelectedValueChanged(object<span class="w">·</span>sender,<span class="w">·</span>EventArgs<span class="w">·</span>e)<span class="w ret">↵</span></div>
<div class="ln" style="left:31px;top:750px">46</div>
<div class="code" style="left:75px;top:750px"><span class="w">········</span>{<span class="w ret">↵</span></div>
<div class="ln" style="left:31px;top:765px">47</div>
<div class="code" style="left:75px;top:765px"><span class="w">············</span>_threadCount<span class="w">·</span>=<span class="w">·</span>Convert.ToInt32(comboBox1.SelectedItem.ToString());<span class="w ret">↵</span></div>
<div class="ln" style="left:31px;top:780px">48</div>
<div class="code" style="left:75px;top:780px"><span class="w">········</span>}<span class="w ret">↵</span></div>
<div class="ln" style="left:31px;top:795px">49</div>
<div class="code" style="left:75px;top:795px"><span class="w">········</span>#endregion<span class="w ret">↵</span></div>
<div class="ln" style="left:31px;top:810px">50</div>
<div class="code" style="left:75px;top:810px"><span class="w ret">↵</span></div>
<div class="ln" style="left:31px;top:825px">51</div>
<div class="code" style="left:75px;top:825px"><span class="w">········</span>#region<span class="w">·</span>btnStart_Click<span class="w ret">↵</span></div>
<div class="ln" style="left:31px;top:840px">52</div>
<div class="code" style="left:75px;top:840px"><span class="w">········</span>private<span class="w">·</span>void<span class="w">·</span>btnStart_Click(object<span class="w">·</span>sender,<span class="w">·</span>EventArgs<span class="w">·</span>e)<span class="w ret">↵</span></div>
<div class="ln" style="left:31px;top:855px">53</div>
<div class="code" style="left:75px;top:855px"><span class="w">········</span>{<span class="w ret">↵</span></div>
<div class="ln" style="left:31px;top:870px">54</div>
<div class="code" style="left:75px;top:870px"><span class="w">············</span>if<span class="w">·</span>(!_start)<span class="w ret">↵</span></div>
<div class="ln" style="left:31px;top:885px">55</div>
<div class="code" style="left:75px;top:885px"><span class="w">············</span>{<span class="w ret">↵</span></div>
<div class="ln" style="left:31px;top:900px">56</div>
<div class="code" style="left:75px;top:900px"><span class="w">················</span>btnStart.Text<span class="w">·</span>=<span class="w">·</span>"<span class="cj">停止</span>";<span class="w ret">↵</span></div>
<div class="ln" style="left:31px;top:915px">57</div>
<div class="code" style="left:75px;top:915px"><span class="w">················</span>_start<span class="w">·</span>=<span class="w">·</span>true;<span class="w ret">↵</span></div>
<div class="ln" style="left:31px;top:930px">58</div>
<div class="code" style="left:75px;top:930px"><span class="w">················</span>Run();<span class="w ret">↵</span></div>
<div class="ln" style="left:31px;top:945px">59</div>
<div class="code" style="left:75px;top:945px"><span class="w">············</span>}<span class="w ret">↵</span></div>
<div class="ln" style="left:31px;top:960px;height:7px;overflow:hidden">60</div>
<div class="code" style="left:75px;top:960px;height:7px;overflow:hidden"><span class="w">············</span>else<span class="w ret">↵</span></div>
<!-- right pane -->
<div class="a" style="left:978px;top:165px;width:43px;height:802px;background:#c8c8c8"></div>
<div class="ln" style="left:977px;top:165px">9</div>
<div class="code" style="left:1021px;top:165px">using<span class="w">·</span>System.Threading.Tasks;<span class="w ret">↵</span></div>
<div class="ln" style="left:977px;top:180px">10</div>
<div class="code" style="left:1021px;top:180px">using<span class="w">·</span>System.Windows.Forms;<span class="w ret">↵</span></div>
<div class="ln" style="left:977px;top:195px">11</div>
<div class="code" style="left:1021px;top:195px"><span class="w ret">↵</span></div>
<div class="ln" style="left:977px;top:210px">12</div>
<div class="code" style="left:1021px;top:210px">namespace<span class="w">·</span>CPUTest<span class="w ret">↵</span></div>
<div class="ln" style="left:977px;top:225px">13</div>
<div class="code" style="left:1021px;top:225px">{<span class="w ret">↵</span></div>
<div class="ln" style="left:977px;top:240px">14</div>
<div class="code" style="left:1021px;top:240px"><span class="w">····</span>public<span class="w">·</span>partial<span class="w">·</span>class<span class="w">·</span>Form1<span class="w">·</span>:<span class="w">·</span>Form<span class="w ret">↵</span></div>
<div class="ln" style="left:977px;top:255px">15</div>
<div class="code" style="left:1021px;top:255px"><span class="w">····</span>{<span class="w ret">↵</span></div>
<div class="ln" style="left:977px;top:270px">16</div>
<div class="code" style="left:1021px;top:270px"><span class="w">········</span>#region<span class="w">·</span><span class="cj">变量</span><span class="w ret">↵</span></div>
<div class="ln" style="left:977px;top:285px">17</div>
<div class="code" style="left:1021px;top:285px"><span class="w">········</span>private<span class="w">·</span>bool<span class="w">·</span>_start<span class="w">·</span>=<span class="w">·</span>false;<span class="w ret">↵</span></div>
<div class="ln" style="left:977px;top:300px">18</div>
<div class="code" style="left:1021px;top:300px"><span class="w">········</span>private<span class="w">·</span>int<span class="w">·</span>_threadCount<span class="w">·</span>=<span class="w">·</span>8;<span class="w ret">↵</span></div>
<div class="ln" style="left:977px;top:315px">19</div>
<div class="code" style="left:1021px;top:315px"><span class="w">········</span>private<span class="w">·</span>int<span class="w">·</span>_m<span class="w">·</span>=<span class="w">·</span>800000;<span class="w ret">↵</span></div>
<div class="ln" style="left:977px;top:330px">20</div>
<div class="code" style="left:1021px;top:330px"><span class="w">········</span>private<span class="w">·</span>int<span class="w">·</span>_count<span class="w">·</span>=<span class="w">·</span>0;<span class="w ret">↵</span></div>
<div class="ln" style="left:977px;top:345px">21</div>
<div class="code" style="left:1021px;top:345px"><span class="w">········</span>private<span class="w">·</span>object<span class="w">·</span>_lock<span class="w">·</span>=<span class="w">·</span>new<span class="w">·</span>object();<span class="w ret">↵</span></div>
<div class="ln" style="left:977px;top:360px">22</div>
<div class="code" style="left:1021px;top:360px"><span class="w">········</span>private<span class="w">·</span>System.Timers.Timer<span class="w">·</span>_timerScore;<span class="w ret">↵</span></div>
<div class="ln" style="left:977px;top:375px">23</div>
<div class="code" style="left:1021px;top:375px"><span class="w">········</span>private<span class="w">·</span>System.Timers.Timer<span class="w">·</span>_timerTime;<span class="w ret">↵</span></div>
<div class="ln" style="left:977px;top:390px">24</div>
<div class="code" style="left:1021px;top:390px"><span class="w">········</span>#endregion<span class="w ret">↵</span></div>
<div class="ln" style="left:977px;top:405px">25</div>
<div class="code" style="left:1021px;top:405px"><span class="w ret">↵</span></div>
<div class="ln" style="left:977px;top:420px">26</div>
<div class="code" style="left:1021px;top:420px"><span class="w">········</span>#region<span class="w">·</span>Form1<span class="w ret">↵</span></div>
<div class="ln" style="left:977px;top:435px">27</div>
<div class="code" style="left:1021px;top:435px"><span class="w">········</span>public<span class="w">·</span>Form1()<span class="w ret">↵</span></div>
<div class="ln" style="left:977px;top:450px">28</div>
<div class="code" style="left:1021px;top:450px"><span class="w">········</span>{<span class="w ret">↵</span></div>
<div class="ln" style="left:977px;top:465px">29</div>
<div class="code" style="left:1021px;top:465px"><span class="w">············</span>InitializeComponent();<span class="w ret">↵</span></div>
<div class="ln" style="left:977px;top:480px">30</div>
<div class="code" style="left:1021px;top:480px"><span class="w">········</span>}<span class="w ret">↵</span></div>
<div class="ln" style="left:977px;top:495px">31</div>
<div class="code" style="left:1021px;top:495px"><span class="w">········</span>#endregion<span class="w ret">↵</span></div>
<div class="ln" style="left:977px;top:510px">32</div>
<div class="code" style="left:1021px;top:510px"><span class="w ret">↵</span></div>
<div class="ln" style="left:977px;top:525px">33</div>
<div class="code" style="left:1021px;top:525px"><span class="w">········</span>#region<span class="w">·</span>Form1_Load<span class="w ret">↵</span></div>
<div class="ln" style="left:977px;top:540px">34</div>
<div class="code" style="left:1021px;top:540px"><span class="w">········</span>private<span class="w">·</span>void<span class="w">·</span>Form1_Load(object<span class="w">·</span>sender,<span class="w">·</span>EventArgs<span class="w">·</span>e)<span class="w ret">↵</span></div>
<div class="ln" style="left:977px;top:555px">35</div>
<div class="code" style="left:1021px;top:555px"><span class="w">········</span>{<span class="w ret">↵</span></div>
<div class="a" style="left:1021px;top:570px;width:878px;height:15px;background:#ffff00"></div>
<div class="ln" style="left:977px;top:570px">36</div>
<div class="code" style="left:1021px;top:570px"><span class="w">············</span>for<span class="w">·</span>(int<span class="w">·</span>i<span class="w">·</span>=<span class="w">·</span>Environment.ProcessorCount;<span class="w">·</span>i<span class="w">·</span>&gt;<span class="w">·</span>0;<span class="w">·</span>i<span class="w">·</span>-=<span class="w">·</span>2)<span class="w ret">↵</span></div>
<svg class="a" style="left:982px;top:571.7px" width="13" height="13" viewBox="0 0 13 13"><path d="M5 0.5h3v4.5h4.5v3H8v4.5H5V8H0.5V5H5z" fill="#2fa3b6" stroke="#1a7f93" stroke-width=".6"/><path d="M5.6 1.2h1v4.4H1.2v1" stroke="#8fe0ea" stroke-width=".7" fill="none"/></svg>
<div class="a" style="left:1021px;top:585px;width:878px;height:15px;background:#c8c8c8"></div>
<div class="ln" style="left:977px;top:600px">37</div>
<div class="code" style="left:1021px;top:600px"><span class="w">············</span>{<span class="w ret">↵</span></div>
<div class="a" style="left:1021px;top:615px;width:878px;height:15px;background:#ffff00"></div>
<div class="ln" style="left:977px;top:615px">38</div>
<div class="code" style="left:1021px;top:615px"><span class="w">················</span>comboBox1.Items.Add(i);<span class="w ret">↵</span></div>
<svg class="a" style="left:982px;top:616.7px" width="13" height="13" viewBox="0 0 13 13"><path d="M5 0.5h3v4.5h4.5v3H8v4.5H5V8H0.5V5H5z" fill="#2fa3b6" stroke="#1a7f93" stroke-width=".6"/><path d="M5.6 1.2h1v4.4H1.2v1" stroke="#8fe0ea" stroke-width=".7" fill="none"/></svg>
<div class="ln" style="left:977px;top:630px">39</div>
<div class="code" style="left:1021px;top:630px"><span class="w">············</span>}<span class="w ret">↵</span></div>
<div class="a" style="left:1021px;top:645px;width:878px;height:15px;background:#ffff00"></div>
<div class="ln" style="left:977px;top:645px">40</div>
<div class="code" style="left:1021px;top:645px"><span class="w ret">↵</span></div>
<svg class="a" style="left:982px;top:646.7px" width="13" height="13" viewBox="0 0 13 13"><path d="M5 0.5h3v4.5h4.5v3H8v4.5H5V8H0.5V5H5z" fill="#2fa3b6" stroke="#1a7f93" stroke-width=".6"/><path d="M5.6 1.2h1v4.4H1.2v1" stroke="#8fe0ea" stroke-width=".7" fill="none"/></svg>
<div class="a" style="left:1021px;top:660px;width:878px;height:15px;background:#ffff00"></div>
<div class="ln" style="left:977px;top:660px">41</div>
<div class="code" style="left:1021px;top:660px"><span class="w">············</span>comboBox1.SelectedItem<span class="w">·</span>=<span class="w">·</span>Environment.ProcessorCount;<span class="w ret">↵</span></div>
<svg class="a" style="left:982px;top:661.7px" width="13" height="13" viewBox="0 0 13 13"><path d="M5 0.5h3v4.5h4.5v3H8v4.5H5V8H0.5V5H5z" fill="#2fa3b6" stroke="#1a7f93" stroke-width=".6"/><path d="M5.6 1.2h1v4.4H1.2v1" stroke="#8fe0ea" stroke-width=".7" fill="none"/></svg>
<div class="ln" style="left:977px;top:675px">42</div>
<div class="code" style="left:1021px;top:675px"><span class="w">········</span>}<span class="w ret">↵</span></div>
<div class="ln" style="left:977px;top:690px">43</div>
<div class="code" style="left:1021px;top:690px"><span class="w">········</span>#endregion<span class="w ret">↵</span></div>
<div class="ln" style="left:977px;top:705px">44</div>
<div class="code" style="left:1021px;top:705px"><span class="w ret">↵</span></div>
<div class="ln" style="left:977px;top:720px">45</div>
<div class="code" style="left:1021px;top:720px"><span class="w">········</span>#region<span class="w">·</span>comboBox1_SelectedValueChanged<span class="w ret">↵</span></div>
<div class="ln" style="left:977px;top:735px">46</div>
<div class="code" style="left:1021px;top:735px"><span class="w">········</span>private<span class="w">·</span>void<span class="w">·</span>comboBox1_SelectedValueChanged(object<span class="w">·</span>sender,<span class="w">·</span>EventArgs<span class="w">·</span>e)<span class="w ret">↵</span></div>
<div class="ln" style="left:977px;top:750px">47</div>
<div class="code" style="left:1021px;top:750px"><span class="w">········</span>{<span class="w ret">↵</span></div>
<div class="ln" style="left:977px;top:765px">48</div>
<div class="code" style="left:1021px;top:765px"><span class="w">············</span>_threadCount<span class="w">·</span>=<span class="w">·</span>Convert.ToInt32(comboBox1.SelectedItem.ToString());<span class="w ret">↵</span></div>
<div class="ln" style="left:977px;top:780px">49</div>
<div class="code" style="left:1021px;top:780px"><span class="w">········</span>}<span class="w ret">↵</span></div>
<div class="ln" style="left:977px;top:795px">50</div>
<div class="code" style="left:1021px;top:795px"><span class="w">········</span>#endregion<span class="w ret">↵</span></div>
<div class="ln" style="left:977px;top:810px">51</div>
<div class="code" style="left:1021px;top:810px"><span class="w ret">↵</span></div>
<div class="ln" style="left:977px;top:825px">52</div>
<div class="code" style="left:1021px;top:825px"><span class="w">········</span>#region<span class="w">·</span>btnStart_Click<span class="w ret">↵</span></div>
<div class="ln" style="left:977px;top:840px">53</div>
<div class="code" style="left:1021px;top:840px"><span class="w">········</span>private<span class="w">·</span>void<span class="w">·</span>btnStart_Click(object<span class="w">·</span>sender,<span class="w">·</span>EventArgs<span class="w">·</span>e)<span class="w ret">↵</span></div>
<div class="ln" style="left:977px;top:855px">54</div>
<div class="code" style="left:1021px;top:855px"><span class="w">········</span>{<span class="w ret">↵</span></div>
<div class="ln" style="left:977px;top:870px">55</div>
<div class="code" style="left:1021px;top:870px"><span class="w">············</span>if<span class="w">·</span>(!_start)<span class="w ret">↵</span></div>
<div class="ln" style="left:977px;top:885px">56</div>
<div class="code" style="left:1021px;top:885px"><span class="w">············</span>{<span class="w ret">↵</span></div>
<div class="ln" style="left:977px;top:900px">57</div>
<div class="code" style="left:1021px;top:900px"><span class="w">················</span>btnStart.Text<span class="w">·</span>=<span class="w">·</span>"<span class="cj">停止</span>";<span class="w ret">↵</span></div>
<div class="ln" style="left:977px;top:915px">58</div>
<div class="code" style="left:1021px;top:915px"><span class="w">················</span>_start<span class="w">·</span>=<span class="w">·</span>true;<span class="w ret">↵</span></div>
<div class="ln" style="left:977px;top:930px">59</div>
<div class="code" style="left:1021px;top:930px"><span class="w">················</span>Run();<span class="w ret">↵</span></div>
<div class="ln" style="left:977px;top:945px">60</div>
<div class="code" style="left:1021px;top:945px"><span class="w">············</span>}<span class="w ret">↵</span></div>
<div class="ln" style="left:977px;top:960px;height:7px;overflow:hidden">61</div>
<div class="code" style="left:1021px;top:960px;height:7px;overflow:hidden"><span class="w">············</span>else<span class="w ret">↵</span></div>
<!-- selected block borders -->
<div class="a" style="left:75px;top:570px;width:878px;height:2px;background:#606060"></div>
<div class="a" style="left:75px;top:598px;width:878px;height:2px;background:#606060"></div>
<div class="a" style="left:1021px;top:570px;width:879px;height:2px;background:#606060"></div>
<div class="a" style="left:1021px;top:598px;width:879px;height:2px;background:#606060"></div>
<!-- annotations -->
<svg class="a" style="left:0;top:138px" width="1920" height="880" viewBox="0 138 1920 880">
<rect x="2.5" y="286.5" width="35" height="62" fill="none" stroke="#fb3535" stroke-width="3"/>
<polygon points="505,313.6 505,314.6 70,326.8 70,331 53.5,323 70,315.3 70,319.2" fill="#fa3838"/>
<polygon points="611.3,342 611.9,342.2 567.5,530 571.8,531.3 560,544.5 556,527.5 560.5,528.5" fill="#fa3838"/>
<polygon points="733.2,346.6 732.8,347.4 1266.8,554 1265,557.8 1284,555.6 1271.5,543.2 1269.5,547.2" fill="#fa3838"/>
<text x="456" y="198" font-family="'Liberation Sans','Noto Sans CJK SC',sans-serif" font-size="19" fill="#f23c3c" font-weight="350">左边旧版本文件</text>
<text x="1449" y="233" font-family="'Liberation Sans','Noto Sans CJK SC',sans-serif" font-size="19" fill="#f23c3c" font-weight="350">右边新版本文件</text>
<text x="513" y="326" font-family="'Liberation Sans','Noto Sans CJK SC',sans-serif" font-size="19" fill="#f23c3c" font-weight="350">文件变化的地方高亮显示</text>
</svg>

</body></html>
